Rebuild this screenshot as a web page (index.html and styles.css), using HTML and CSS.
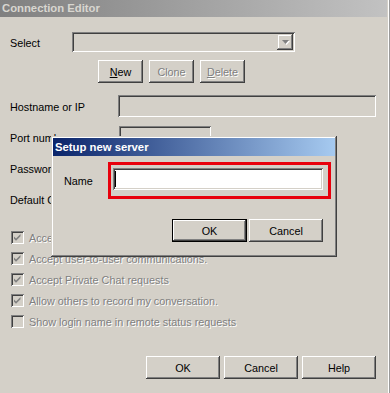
FILE: index.html
```html
<!DOCTYPE html>
<html lang="en">
<head>
    <meta charset="UTF-8">
    <title>Connection Editor</title>
    <link rel="stylesheet" href="styles.css">
</head>
<body>
    <div class="window">
        <div class="caption inactive">Connection Editor</div>
        <div class="content">
            <div class="row select-row">
                <span class="label">Select</span>
                <div class="combo">
                    <div class="combo-btn">
                        <svg width="7" height="4" viewBox="0 0 7 4"><path d="M0 0h7L3.5 4z" fill="#808080"/></svg>
                    </div>
                </div>
            </div>
            <div class="row action-row">
                <button class="btn small"><u>N</u>ew</button>
                <button class="btn small disabled">Clone</button>
                <button class="btn small disabled"><u>D</u>elete</button>
            </div>
            <div class="row field-row">
                <span class="label wide">Hostname or IP</span>
                <div class="field long"></div>
            </div>
            <div class="row field-row">
                <span class="label wide">Port number</span>
                <div class="field short"></div>
            </div>
            <div class="row field-row">
                <span class="label wide">Password</span>
                <div class="field short"></div>
            </div>
            <div class="row field-row">
                <span class="label wide">Default Channel</span>
                <div class="field short"></div>
            </div>

            <div class="checks">
                <div class="check-row"><span class="box checked"><svg width="9" height="9" viewBox="0 0 9 9"><path d="M1 3.5l2 2 4.5-4.5v2.2L3 7.7 1 5.7z" fill="#808080"/></svg></span><span class="dim">Accept incoming connections</span></div>
                <div class="check-row"><span class="box checked"><svg width="9" height="9" viewBox="0 0 9 9"><path d="M1 3.5l2 2 4.5-4.5v2.2L3 7.7 1 5.7z" fill="#808080"/></svg></span><span class="dim">Accept user-to-user communications.</span></div>
                <div class="check-row"><span class="box checked"><svg width="9" height="9" viewBox="0 0 9 9"><path d="M1 3.5l2 2 4.5-4.5v2.2L3 7.7 1 5.7z" fill="#808080"/></svg></span><span class="dim">Accept Private Chat requests</span></div>
                <div class="check-row"><span class="box checked"><svg width="9" height="9" viewBox="0 0 9 9"><path d="M1 3.5l2 2 4.5-4.5v2.2L3 7.7 1 5.7z" fill="#808080"/></svg></span><span class="dim">Allow others to record my conversation.</span></div>
                <div class="check-row"><span class="box"></span><span class="dim">Show login name in remote status requests</span></div>
            </div>

            <div class="row footer">
                <button class="btn">OK</button>
                <button class="btn">Cancel</button>
                <button class="btn">Help</button>
            </div>
        </div>

        <div class="dialog">
            <div class="caption active">Setup new server</div>
            <div class="dialog-body">
                <div class="name-row">
                    <span class="name-label">Name</span>
                    <div class="highlight">
                        <div class="field white"><span class="caret"></span></div>
                    </div>
                </div>
                <div class="dialog-buttons">
                    <button class="btn default">OK</button>
                    <button class="btn">Cancel</button>
                </div>
            </div>
        </div>
    </div>
</body>
</html>
```

FILE: styles.css
```css
body {
    margin: 0;
    background: #d4d0c8;
    font-family: "Liberation Sans", Arial, sans-serif;
    font-size: 10.8px;
    color: #000;
}
.window {
    position: relative;
    width: 390px;
    height: 393px;
    box-shadow: inset -1px 0 #9a9a9a, inset -2px 0 #fff;
}
.caption {
    height: 17px;
    line-height: 17px;
    padding-left: 2px;
    font-weight: bold;
    font-size: 11.3px;
}
.caption.inactive {
    width: 385px;
    background: linear-gradient(to right, #808080, #c2c2c2);
    color: #d8d6d0;
}
.caption.active {
    height: 18px;
    line-height: 18px;
    background: linear-gradient(to right, #0a246a, #a6caf0);
    color: #fff;
}
.content {
    padding: 15px 14px 0 10px;
}
.row {
    display: flex;
    align-items: center;
}
.label {
    width: 62px;
    padding-top: 1px;
}
.label.wide {
    width: 109px;
    white-space: nowrap;
    overflow: hidden;
}
/* sunken edit / combo frame */
.combo,
.field,
.box {
    box-sizing: border-box;
    box-shadow: inset 1px 1px #808080, inset -1px -1px #fff, inset 2px 2px #404040, inset -2px -2px #d4d0c8;
}
.combo {
    position: relative;
    width: 223px;
    height: 20px;
}
.combo-btn {
    position: absolute;
    top: 2px;
    right: 2px;
    width: 16px;
    height: 16px;
    display: flex;
    align-items: center;
    justify-content: center;
    box-shadow: inset -1px -1px #404040, inset 1px 1px #d4d0c8, inset -2px -2px #808080, inset 2px 2px #fff;
}
.combo-btn svg {
    filter: drop-shadow(1px 1px 0 #fff);
}
.btn {
    width: 74px;
    height: 23px;
    padding: 0;
    border: none;
    background: #d4d0c8;
    font-family: "Liberation Sans", Arial, sans-serif;
    font-size: 10.8px;
    color: #000;
    box-shadow: inset -1px -1px #404040, inset 1px 1px #fff, inset -2px -2px #808080, inset 2px 2px #d4d0c8;
}
.btn.small {
    width: 45px;
}
.btn.disabled {
    color: #808080;
    text-shadow: 1px 1px 0 #fff;
}
.btn.default {
    width: 75px;
    box-shadow: inset 0 0 0 1px #000, inset -2px -2px #404040, inset 2px 2px #fff, inset -3px -3px #808080;
}
.action-row {
    margin-top: 8px;
    padding-left: 88px;
    gap: 6px;
}
.field-row {
    margin-top: 12px;
}
.field-row + .field-row {
    margin-top: 9px;
}
.field {
    height: 22px;
    flex-shrink: 0;
}
.field.long {
    width: 258px;
}
.field.short {
    width: 92px;
}
.checks {
    margin-top: 21px;
    padding-left: 1px;
    display: flex;
    flex-direction: column;
    gap: 8px;
}
.check-row {
    display: flex;
    align-items: center;
    gap: 5px;
    height: 13px;
}
.box {
    width: 13px;
    height: 13px;
    display: flex;
    align-items: center;
    justify-content: center;
    flex-shrink: 0;
}
.dim {
    color: #808080;
    text-shadow: 1px 1px 0 #fff;
    white-space: nowrap;
}
.footer {
    margin-top: 28px;
    justify-content: flex-end;
    gap: 4px;
}

/* modal dialog */
.dialog {
    position: absolute;
    left: 51px;
    top: 136px;
    width: 286px;
    height: 121px;
    box-sizing: border-box;
    padding: 2px;
    background: #d4d0c8;
    box-shadow: inset -1px -1px #404040, inset 1px 1px #d4d0c8, inset -2px -2px #808080, inset 2px 2px #fff;
}
.dialog-body {
    padding: 6px 0 0 11px;
}
.name-row {
    display: flex;
    align-items: center;
}
.name-label {
    width: 44px;
    flex-shrink: 0;
}
.highlight {
    flex-shrink: 0;
    border: 3px solid #e8000c;
    padding: 3px 5px 6px 2px;
}
.field.white {
    width: 210px;
    background: #fff;
    padding: 3px 0 0 2px;
}
.caret {
    display: block;
    width: 1px;
    height: 16px;
    background: #000;
}
.dialog-buttons {
    display: flex;
    justify-content: flex-end;
    gap: 2px;
    margin-top: 20px;
    padding-right: 12px;
}
```
